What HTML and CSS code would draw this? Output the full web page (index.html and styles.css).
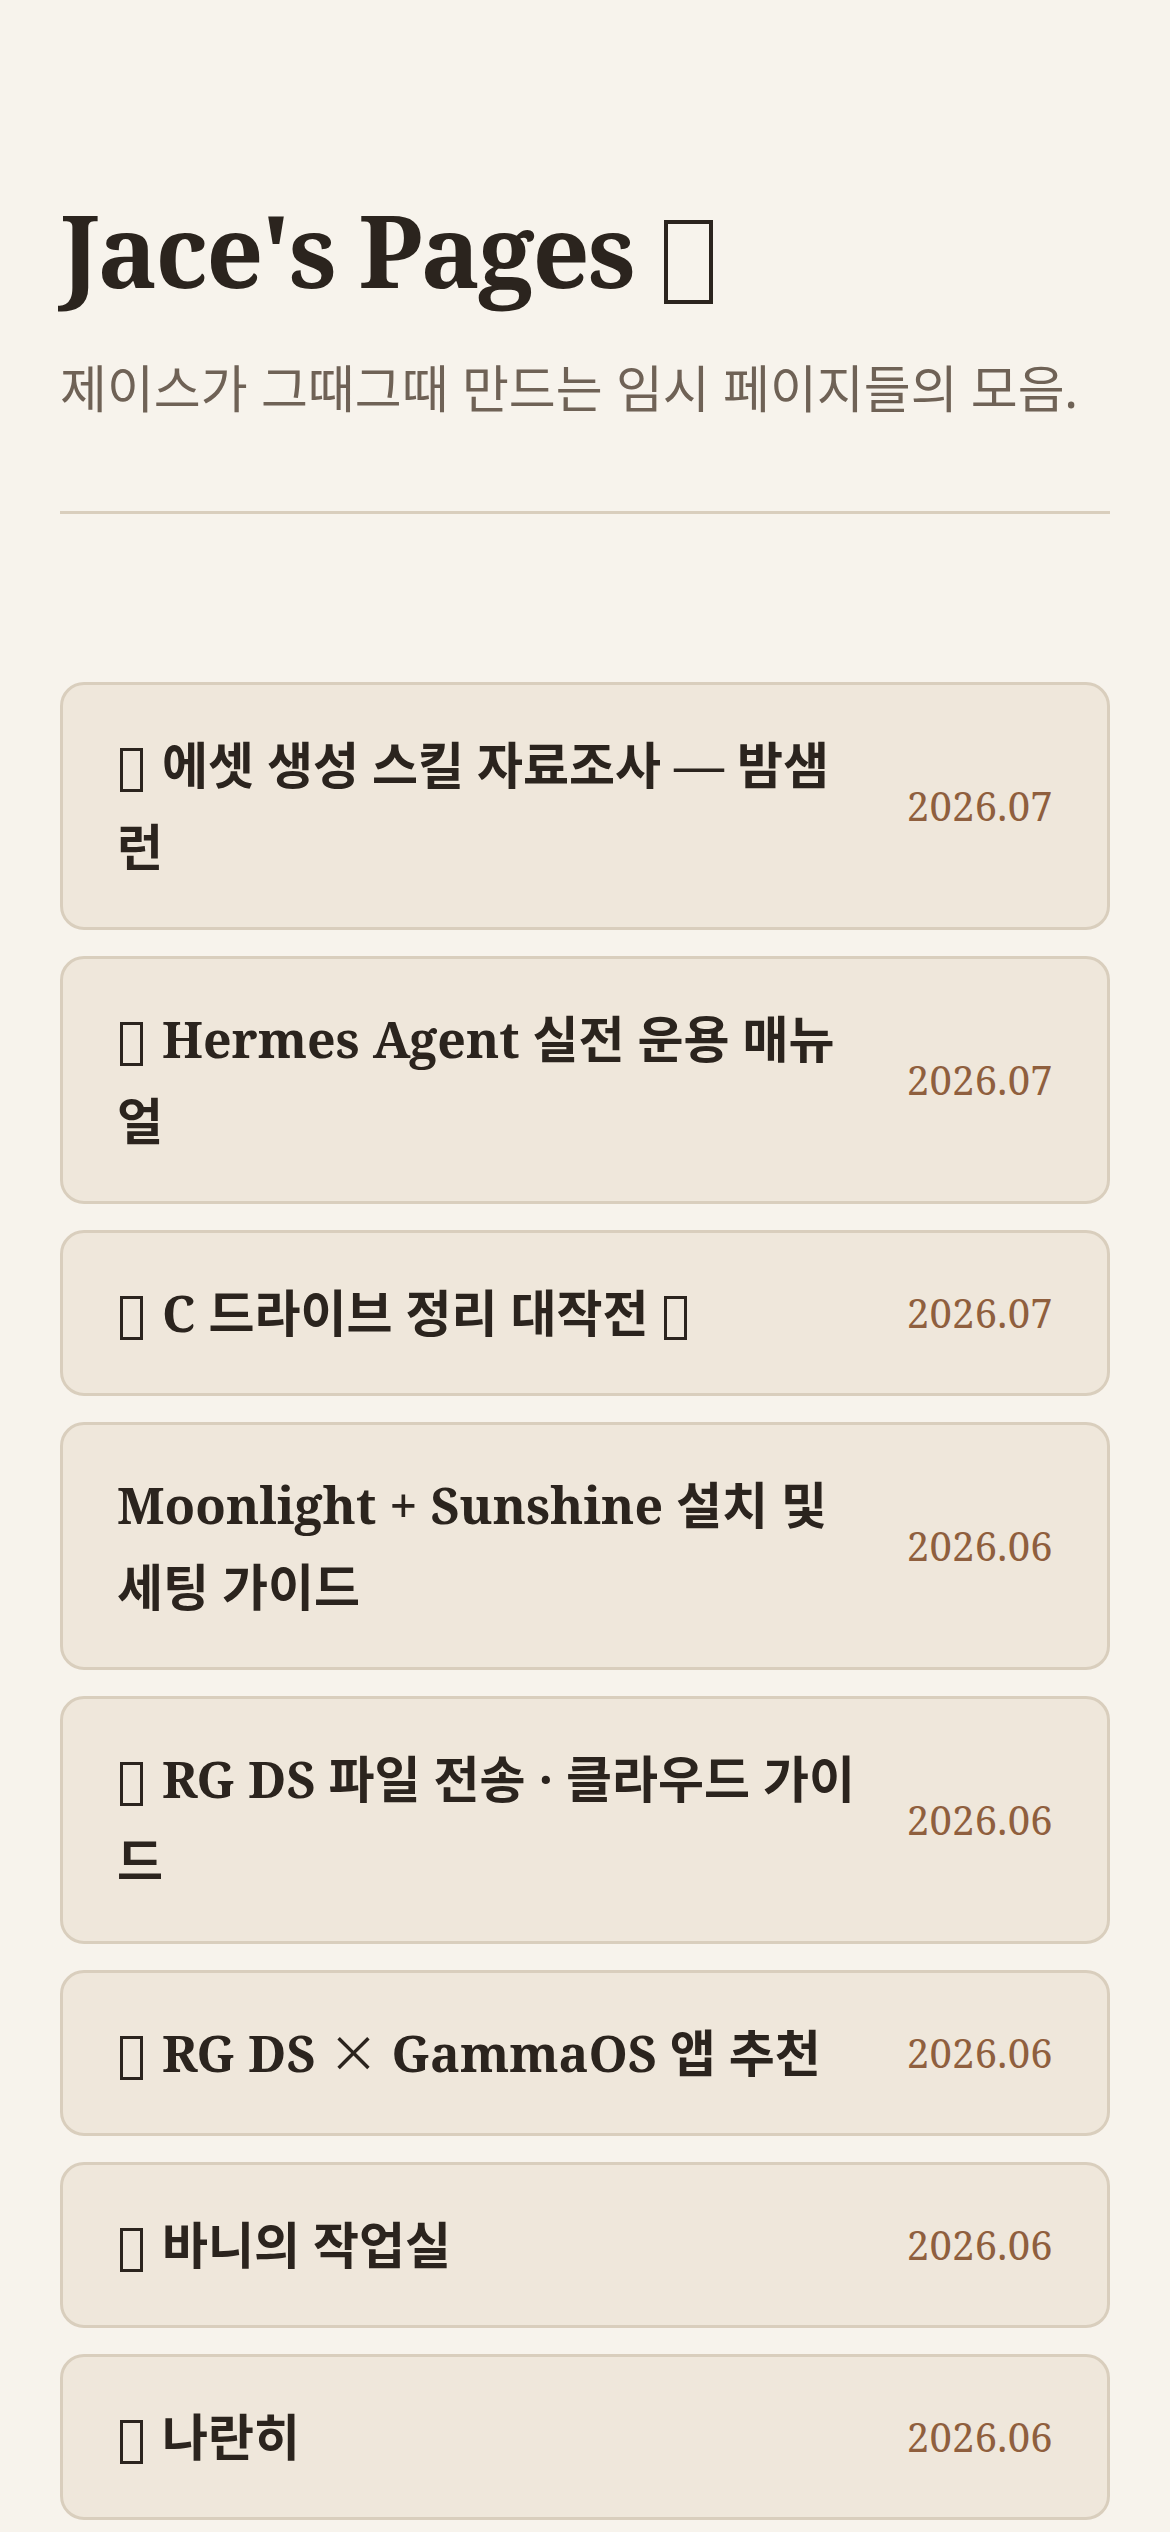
FILE: index.html
```html
<!DOCTYPE html>
<html lang="ko">
<head>
<meta charset="utf-8">
<title>Jace's Pages</title>
<link rel="stylesheet" href="styles.css">
</head>
<body>
<main class="page">
  <header class="hero">
    <h1 class="title">Jace's Pages <span class="tofu tofu-lg" role="img" aria-label="🗂️"></span></h1>
    <p class="subtitle">제이스가 그때그때 만드는 임시 페이지들의 모음.</p>
  </header>
  <ul class="list">
    <li><a class="card" href="#"><span class="card-title"><span class="tofu" role="img" aria-label="🎨"></span> 에셋 생성 스킬 자료조사 — 밤샘 런</span><span class="card-date">2026.07</span></a></li>
    <li><a class="card" href="#"><span class="card-title"><span class="tofu" role="img" aria-label="🤖"></span> Hermes Agent 실전 운용 매뉴얼</span><span class="card-date">2026.07</span></a></li>
    <li><a class="card" href="#"><span class="card-title"><span class="tofu" role="img" aria-label="🧹"></span> C 드라이브 정리 대작전 <span class="tofu" role="img" aria-label="🚀"></span></span><span class="card-date">2026.07</span></a></li>
    <li><a class="card" href="#"><span class="card-title">Moonlight + Sunshine 설치 및 세팅 가이드</span><span class="card-date">2026.06</span></a></li>
    <li><a class="card" href="#"><span class="card-title"><span class="tofu" role="img" aria-label="🎮"></span> RG DS 파일 전송 · 클라우드 가이드</span><span class="card-date">2026.06</span></a></li>
    <li><a class="card" href="#"><span class="card-title"><span class="tofu" role="img" aria-label="🎮"></span> RG DS <span class="cjk">×</span> GammaOS 앱 추천</span><span class="card-date">2026.06</span></a></li>
    <li><a class="card" href="#"><span class="card-title"><span class="tofu" role="img" aria-label="🐰"></span> 바니의 작업실</span><span class="card-date">2026.06</span></a></li>
    <li><a class="card" href="#"><span class="card-title"><span class="tofu" role="img" aria-label="👫"></span> 나란히</span><span class="card-date">2026.06</span></a></li>
  </ul>
</main>
</body>
</html>
```
FILE: styles.css
```css
* { box-sizing: border-box; }
html, body {
  margin: 0;
  padding: 0;
  background: #f7f3ec;
}
body {
  font-family: "Noto Serif", "Liberation Serif", "Noto Sans CJK KR", serif;
  color: #2b241e;
}
.page {
  padding: 189px 60px 40px;
}
.hero {
  padding-bottom: 86px;
  border-bottom: 3px solid #d9cebd;
}
.title {
  margin: 0;
  font-size: 100px;
  line-height: 120px;
  font-weight: 700;
  letter-spacing: -2px;
  color: #2b241e;
}
.subtitle {
  margin: 42px 0 0;
  font-size: 51px;
  line-height: 74px;
  color: #6f6256;
}
.tofu {
  display: inline-block;
  width: 23px;
  height: 44px;
  margin: 0 6px 0 3px;
  border: 3px solid #2b241e;
  vertical-align: -8px;
}
.tofu-lg {
  width: 49px;
  height: 84px;
  margin: 0 4px 0 6px;
  border-width: 4px;
  vertical-align: -16px;
}
.cjk {
  font-family: "Noto Sans CJK KR", sans-serif;
  font-weight: 400;
  line-height: 1;
}
.list {
  list-style: none;
  margin: 168px 0 0;
  padding: 0;
  display: flex;
  flex-direction: column;
  gap: 26px;
}
.card {
  display: flex;
  align-items: center;
  gap: 42px;
  padding: 39px 54px;
  background: #efe7db;
  border: 3px solid #d9cebd;
  border-radius: 24px;
  text-decoration: none;
  color: inherit;
}
.card-title {
  flex: 1;
  font-size: 50px;
  line-height: 82px;
  font-weight: 700;
  color: #2b241e;
}
.card-date {
  flex-shrink: 0;
  font-size: 40px;
  line-height: 82px;
  letter-spacing: 0.3px;
  color: #8f5f3e;
}
```
